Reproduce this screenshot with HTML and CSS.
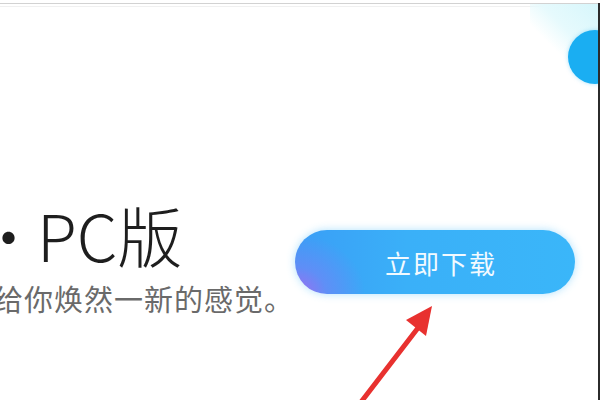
FILE: index.html
```html
<!DOCTYPE html>
<html lang="zh">
<head>
<meta charset="utf-8">
<link rel="stylesheet" href="styles.css">
</head>
<body>
<div class="page">
  <div class="topline"></div>
  <div class="topline2"></div>
  <div class="deco-ray"></div>
  <div class="deco-ball"></div>
  <div class="edge"></div>
  <section class="hero">
    <div class="intro">
      <h1 class="title"><span class="dot">·</span>PC版</h1>
      <p class="subtitle">给你焕然一新的感觉。</p>
    </div>
    <a class="download">立即下载</a>
  </section>
  <svg class="arrow" width="120" height="110" viewBox="0 0 120 110">
    <line x1="12" y1="108" x2="75" y2="26" stroke="#e8312f" stroke-width="5" stroke-linecap="round"/>
    <polygon points="86,8 60,22 80,38" fill="#e8312f"/>
  </svg>
</div>
</body>
</html>
```
FILE: styles.css
```css
* { box-sizing: border-box; }
html, body { margin: 0; padding: 0; }
body {
  width: 600px;
  height: 400px;
  overflow: hidden;
  background: #ffffff;
  font-family: "Noto Sans CJK SC", "Noto Sans", sans-serif;
}
.page {
  position: relative;
  width: 600px;
  height: 400px;
  overflow: hidden;
  background: #fff;
}
.topline {
  margin-top: 3px;
  height: 1px;
  background: #d2d2d2;
}
.topline2 {
  margin-top: 2px;
  height: 1px;
  background: #f0f0f0;
}
.deco-ray {
  position: absolute;
  top: 4px;
  right: 0;
  width: 70px;
  height: 60px;
  background: linear-gradient(225deg, #d6f6fb 0%, #e6fafd 45%, rgba(255,255,255,0) 70%);
}
.deco-ball {
  position: absolute;
  top: 30px;
  left: 568px;
  width: 54px;
  height: 54px;
  border-radius: 50%;
  background: #1aaef2;
  box-shadow: 0 0 4px rgba(26,174,242,0.35);
}
.edge {
  position: absolute;
  top: 3px;
  right: 0;
  width: 2px;
  height: 397px;
  background: #2b2b2b;
}
.hero {
  display: flex;
  align-items: center;
  height: 130px;
  margin-top: 190px;
}
.intro {
  flex: 0 0 295px;
  margin-top: -6px;
}
.title {
  margin: 0;
  font-size: 65px;
  font-weight: 300;
  line-height: 64px;
  color: #1e1e1e;
  letter-spacing: 0;
  white-space: nowrap;
}
.dot {
  display: inline-block;
  margin-left: -24px;
  margin-right: -4px;
}
.subtitle {
  margin: 14px 0 0 -6px;
  font-size: 29px;
  line-height: 36px;
  color: #6a6a6a;
  font-weight: 400;
  letter-spacing: 1px;
  white-space: nowrap;
}
.download {
  flex: 0 0 280px;
  height: 64px;
  border-radius: 32px;
  display: flex;
  align-items: center;
  justify-content: center;
  padding-left: 12px;
  color: #f2faff;
  font-size: 26px;
  letter-spacing: 2px;
  background:
    radial-gradient(ellipse 70px 60px at 0% 100%, #a26cf0 0%, rgba(120,130,246,0.6) 45%, rgba(60,170,250,0) 100%),
    linear-gradient(90deg, #3a9ef6 0%, #3ab0f8 40%, #3ab6f9 100%);
  box-shadow: 0 0 8px rgba(80,190,250,0.45);
}
.arrow {
  position: absolute;
  left: 346px;
  top: 298px;
}
```
